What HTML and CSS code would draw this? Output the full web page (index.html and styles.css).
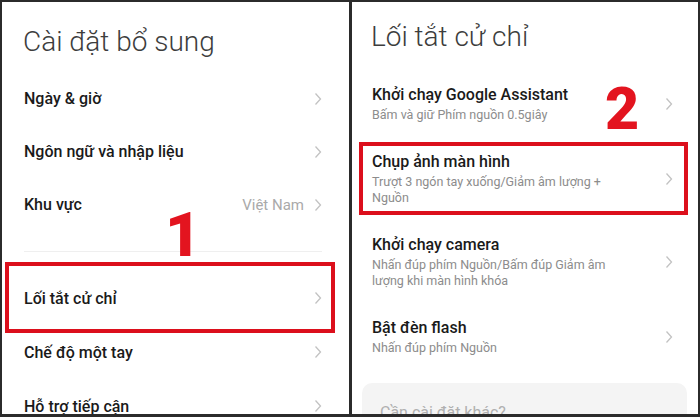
FILE: index.html
```html
<!DOCTYPE html>
<html lang="vi">
<head>
<meta charset="utf-8">
<link rel="stylesheet" href="styles.css">
</head>
<body>
<div class="frame">
  <section class="panel left">
    <h1 class="title">Cài đặt bổ sung</h1>
    <div class="list">
      <div class="row"><span class="label">Ngày &amp; giờ</span><svg class="chev" viewBox="0 0 8 14"><polyline points="1.5,1.5 6.5,7 1.5,12.5"/></svg></div>
      <div class="row"><span class="label">Ngôn ngữ và nhập liệu</span><svg class="chev" viewBox="0 0 8 14"><polyline points="1.5,1.5 6.5,7 1.5,12.5"/></svg></div>
      <div class="row"><span class="label">Khu vực</span><span class="value">Việt Nam</span><svg class="chev" viewBox="0 0 8 14"><polyline points="1.5,1.5 6.5,7 1.5,12.5"/></svg></div>
      <div class="sep"><div class="line"></div></div>
      <div class="row tall hl-left"><span class="label">Lối tắt cử chỉ</span><svg class="chev" viewBox="0 0 8 14"><polyline points="1.5,1.5 6.5,7 1.5,12.5"/></svg></div>
      <div class="row tall"><span class="label">Chế độ một tay</span><svg class="chev" viewBox="0 0 8 14"><polyline points="1.5,1.5 6.5,7 1.5,12.5"/></svg></div>
      <div class="row tall"><span class="label">Hỗ trợ tiếp cận</span><svg class="chev" viewBox="0 0 8 14"><polyline points="1.5,1.5 6.5,7 1.5,12.5"/></svg></div>
    </div>
    <span class="num num1">1</span>
  </section>
  <div class="divider"></div>
  <section class="panel right">
    <h1 class="title rtitle">Lối tắt cử chỉ</h1>
    <div class="list rlist">
      <div class="item">
        <div class="text"><div class="ititle">Khởi chạy Google Assistant</div><div class="sub">Bấm và giữ Phím nguồn 0.5giây</div></div>
        <svg class="chev" viewBox="0 0 8 14"><polyline points="1.5,1.5 6.5,7 1.5,12.5"/></svg>
      </div>
      <div class="item hl-right">
        <div class="text"><div class="ititle">Chụp ảnh màn hình</div><div class="sub">Trượt 3 ngón tay xuống/Giảm âm lượng +<br>Nguồn</div></div>
        <svg class="chev" viewBox="0 0 8 14"><polyline points="1.5,1.5 6.5,7 1.5,12.5"/></svg>
      </div>
      <div class="item">
        <div class="text"><div class="ititle">Khởi chạy camera</div><div class="sub">Nhấn đúp phím Nguồn/Bấm đúp Giảm âm<br>lượng khi màn hình khóa</div></div>
        <svg class="chev" viewBox="0 0 8 14"><polyline points="1.5,1.5 6.5,7 1.5,12.5"/></svg>
      </div>
      <div class="item">
        <div class="text"><div class="ititle">Bật đèn flash</div><div class="sub">Nhấn đúp phím Nguồn</div></div>
        <svg class="chev" viewBox="0 0 8 14"><polyline points="1.5,1.5 6.5,7 1.5,12.5"/></svg>
      </div>
      <div class="card">Cần cài đặt khác?</div>
    </div>
    <span class="num num2">2</span>
  </section>
</div>
</body>
</html>
```
FILE: styles.css
```css
* { box-sizing: border-box; }
html, body { margin: 0; padding: 0; }
body { background: #2b2b2b; font-family: Roboto, "Noto Sans", sans-serif; }

.frame {
  width: 700px;
  height: 417px;
  display: flex;
  background: #2b2b2b;
  border-style: solid;
  border-color: #2b2b2b;
  border-width: 2px 2px 3px 2px;
  overflow: hidden;
}

.panel {
  position: relative;
  background: #fff;
  height: 100%;
  overflow: hidden;
}
.left { width: 347px; }
.divider { width: 3px; background: #2b2b2b; }
.right { flex: 1; }

.title {
  margin: 23px 0 0 21px;
  font-size: 28px;
  font-weight: 300;
  line-height: 34px;
  color: #3d3d3d;
  white-space: nowrap;
}
.rtitle { margin: 18px 0 0 19px; }

.list { margin-top: 13px; }
.rlist { margin-top: 17px; }

.row {
  position: relative;
  height: 53px;
  display: flex;
  align-items: center;
  padding: 0 27px 0 22px;
}
.row.tall { height: 54px; }
.label {
  flex: 1;
  font-size: 16px;
  font-weight: 500;
  color: #1a1a1a;
  white-space: nowrap;
}
.value {
  font-size: 15px;
  color: #aaa;
  margin-right: 10px;
}
.chev {
  width: 8px;
  height: 14px;
  flex: none;
}
.chev polyline {
  fill: none;
  stroke: #c2c2c2;
  stroke-width: 1.3;
}

.sep { height: 40px; padding: 20px 27px 0 22px; }
.sep .line { height: 1px; background: #efefef; }

.hl-left::after {
  content: "";
  position: absolute;
  left: 3px;
  right: 14px;
  top: -9px;
  bottom: -8px;
  border: 4px solid #dc0f1c;
}

.item {
  position: relative;
  display: flex;
  align-items: center;
  padding: 14px 25px 15px 20px;
}
.item .text { flex: 1; }
.ititle {
  font-size: 16px;
  font-weight: 500;
  line-height: 20px;
  color: #1a1a1a;
  white-space: nowrap;
}
.sub {
  margin-top: 2px;
  font-size: 12.5px;
  line-height: 16px;
  color: #8c8c8c;
  white-space: nowrap;
}

.hl-right::after {
  content: "";
  position: absolute;
  left: 7px;
  right: 10px;
  top: 4px;
  bottom: 6px;
  border: 4px solid #dc0f1c;
}

.card {
  margin: 12px 11px 0 10px;
  height: 60px;
  border-radius: 10px;
  background: #f4f4f4;
  padding: 20px 0 0 18px;
  font-size: 16px;
  color: #b0b0b0;
  white-space: nowrap;
}

.num {
  position: absolute;
  font-family: Roboto, "Liberation Sans", sans-serif;
  font-weight: 900;
  color: #e3141f;
  line-height: 1;
}
.num1 { left: 163px; top: 202px; font-size: 62px; }
.num2 { left: 253px; top: 77px; font-size: 59px; }
```
